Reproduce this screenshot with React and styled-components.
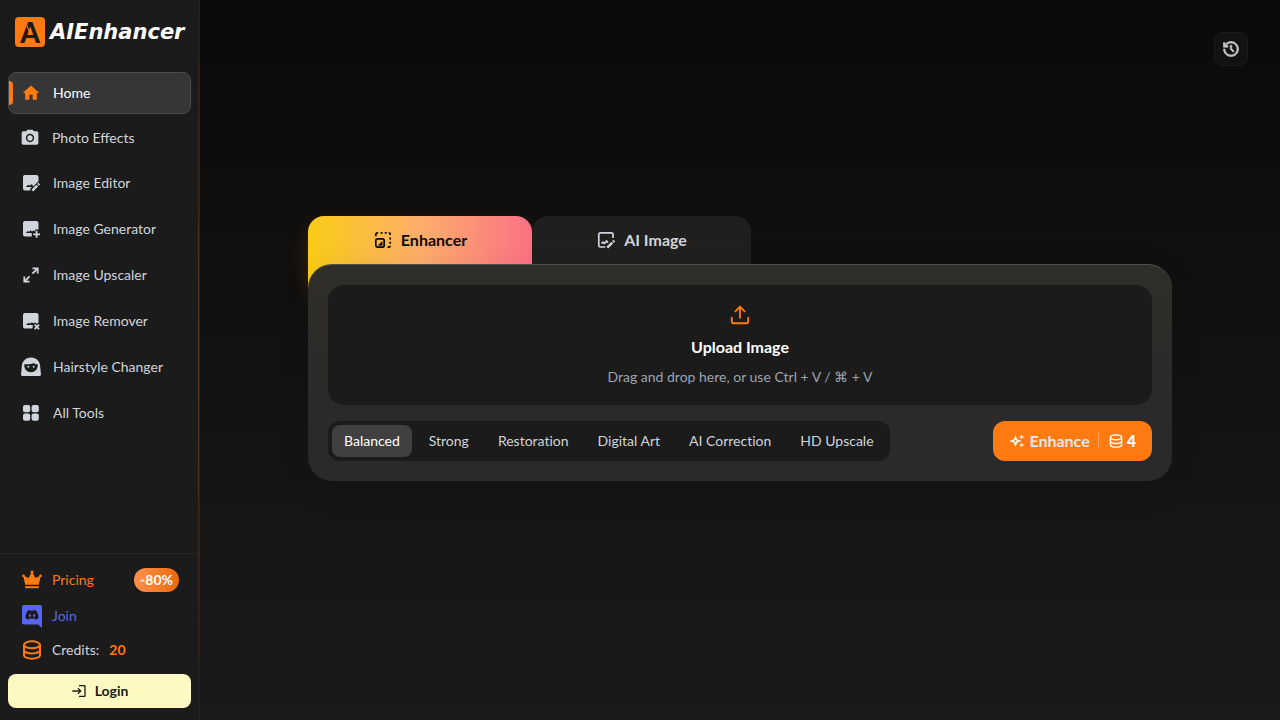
import React, { useState } from "react";
import styled, { createGlobalStyle, css } from "styled-components";
import { Upload } from "lucide-react";
import { FaDiscord } from "react-icons/fa";
import { MdHome, MdLogin, MdPhotoCamera } from "react-icons/md";
import { RiHistoryLine } from "react-icons/ri";

const GlobalStyle = createGlobalStyle`
  * {
    box-sizing: border-box;
  }

  body {
    margin: 0;
    background: #1a1a1a;
    color: #d1d5db;
    font-family: Lato, "Liberation Sans", sans-serif;
    font-size: 14px;
    line-height: 20px;
  }

  button {
    border: 0;
    margin: 0;
    font: inherit;
    color: inherit;
    cursor: pointer;
  }

  a {
    color: inherit;
    text-decoration: none;
  }

  svg {
    display: block;
    flex-shrink: 0;
  }
`;

const Page = styled.div`
  display: grid;
  grid-template-columns: 200px 1fr;
  min-height: 100vh;
`;

const Sidebar = styled.aside`
  position: relative;
  display: flex;
  flex-direction: column;
  background: #1b1b1b;
  border-right: 1px solid #232323;

  &::after {
    content: "";
    position: absolute;
    top: 0;
    right: 0;
    bottom: 0;
    width: 1px;
    background: linear-gradient(
      to bottom,
      transparent,
      rgba(255, 122, 17, 0.3) 50%,
      transparent
    );
  }
`;

const Brand = styled.a`
  display: flex;
  align-items: center;
  gap: 5px;
  height: 64px;
  padding-left: 15px;
  color: #fff;
`;

const BrandMark = styled.span`
  position: relative;
  display: flex;
  align-items: center;
  justify-content: center;
  width: 30px;
  height: 30px;
  border-radius: 4px;
  background: #ff7a11;
  color: #1b1b1b;
  font: 900 28px/28px Lato, sans-serif;

  &::after {
    content: "";
    position: absolute;
    top: 3px;
    left: 12px;
    width: 1px;
    height: 14px;
    background: #ff7a11;
    transform: rotate(-20deg);
  }
`;

const BrandName = styled.span`
  font: italic bold 21px/24px "DejaVu Sans", sans-serif;
`;

const Nav = styled.nav`
  display: flex;
  flex-direction: column;
  flex: 1;
  gap: 4px;
  padding: 8px;
`;

const NavItem = styled.a`
  position: relative;
  display: flex;
  align-items: center;
  gap: 12px;
  padding: 10px 12px;
  border: ${(props) => (props.$plain ? "0" : "1px solid transparent")};
  border-radius: 8px;

  ${(props) =>
    props.$active &&
    css`
      background: #363636;
      border-color: #4a4a4a;
      color: #fff;

      svg {
        color: #ff7a11;
      }

      &::before {
        content: "";
        position: absolute;
        left: 0;
        top: 8px;
        width: 4px;
        height: 24px;
        border-radius: 0 4px 4px 0;
        background: #ff7a11;
      }
    `}
`;

const SidebarFooter = styled.div`
  display: flex;
  flex-direction: column;
  padding: 8px 8px 12px;
  border-top: 1px solid #262626;
`;

const FooterRow = styled.a`
  display: flex;
  align-items: center;
  gap: 10px;
  height: ${(props) => (props.$tall ? "36px" : "32px")};
  padding: 0 12px 0 14px;
  color: ${(props) => props.$color || "#d1d5db"};
`;

const Discount = styled.span`
  margin-left: auto;
  padding: 2px 6px;
  border-radius: 12px;
  background: linear-gradient(to right, #ff914d, #ea6a0c);
  color: #fff;
  font-weight: bold;
`;

const FooterCoins = styled.span`
  color: #ff7a11;
`;

const Credits = styled.strong`
  color: #ff7a11;
`;

const LoginButton = styled.button`
  display: flex;
  align-items: center;
  justify-content: center;
  gap: 8px;
  height: 34px;
  margin-top: 8px;
  border-radius: 8px;
  background: #fef9c3;
  color: #1b1b1b;
  font-weight: bold;
`;

const Main = styled.main`
  display: flex;
  flex-direction: column;
  align-items: center;
  padding: 32px;
  background: linear-gradient(to bottom, #0a0a0a, #1a1a1a);
`;

const HistoryButton = styled.button`
  display: flex;
  align-items: center;
  justify-content: center;
  align-self: flex-end;
  width: 34px;
  height: 34px;
  padding: 0;
  border: 1px solid #1a1a1a;
  border-radius: 8px;
  background: #121212;
  color: #c4c4c4;

  svg {
    stroke: currentColor;
    stroke-width: 1;
  }
`;

const Workspace = styled.section`
  width: 100%;
  max-width: 864px;
  margin-top: 150px;
`;

const Tabs = styled.div`
  display: flex;
  height: 48px;
`;

const Tab = styled.button`
  display: flex;
  align-items: flex-start;
  justify-content: center;
  gap: 8px;
  width: ${(props) => (props.$active ? "224px" : "219px")};
  height: ${(props) => (props.$active ? "72px" : "48px")};
  padding: 12px 0;
  border-radius: 16px 16px 0 0;
  background: ${(props) =>
    props.$active
      ? "linear-gradient(to right, #facc15, #fdae6b 50%, #fb7185)"
      : "linear-gradient(to bottom, #1f1f1f, #21201e)"};
  box-shadow: ${(props) =>
    props.$active ? "0 8px 24px -4px rgba(255, 122, 17, 0.25)" : "none"};
  color: ${(props) => (props.$active ? "#0a0a0a" : "#d1d5db")};
  font-size: 16px;
  font-weight: bold;
  line-height: 24px;

  svg {
    margin-top: 2px;
  }
`;

const Panel = styled.div`
  position: relative;
  display: flex;
  flex-direction: column;
  gap: 16px;
  padding: 20px;
  border-top: 1px solid #53514d;
  border-radius: 24px;
  background: linear-gradient(to bottom, #302e29, #2a2a2a 70%);
  box-shadow: 0 8px 32px rgba(0, 0, 0, 0.1);
`;

const DropZone = styled.button`
  display: flex;
  flex-direction: column;
  align-items: center;
  gap: 8px;
  padding: 18px;
  border-radius: 16px;
  background: #1b1b1b;
  color: #9ca3af;

  svg {
    margin: 1px;
    color: #ff7a11;
  }
`;

const DropTitle = styled.strong`
  color: #fff;
  font-size: 16px;
  line-height: 24px;
`;

const Toolbar = styled.div`
  display: flex;
  align-items: center;
  justify-content: space-between;
`;

const Modes = styled.div`
  display: flex;
  gap: 5px;
  padding: 4px;
  border-radius: 12px;
  background: #1b1b1b;
`;

const Mode = styled.button`
  padding: 6px 12px;
  border-radius: 8px;
  background: ${(props) => (props.$active ? "#404040" : "transparent")};
  color: ${(props) => (props.$active ? "#fff" : "#d1d5db")};
  font-variant-ligatures: none;
`;

const EnhanceButton = styled.button`
  display: flex;
  align-items: center;
  gap: 4px;
  height: 40px;
  padding: 0 16px;
  border-radius: 12px;
  background: #ff7a11;
  color: #e5e7eb;
  font-size: 16px;
  font-weight: bold;
  line-height: 24px;

  svg,
  strong {
    color: #fff;
  }
`;

const Divider = styled.span`
  width: 1px;
  height: 16px;
  margin: 0 6px 0 4px;
  background: #ffa35c;
`;

const ImageEditIcon = () => (
  <svg width="20" height="20" viewBox="0 0 20 20" fill="currentColor">
    <path d="M4 2h11.5a2 2 0 0 1 2 2v4.2L12 13.8l-.5-2-1.3-.5-1.4 1.5-1.5-1L4.7 14h6.2L9.2 15.8V17.6H4a2 2 0 0 1-2-2V4a2 2 0 0 1 2-2z" />
    <path
      d="M11.3 17.7l5-5M17 11.900l1.300-1.300"
      stroke="currentColor"
      strokeWidth="2.5"
    />
  </svg>
);

const ImageAddIcon = () => (
  <svg width="20" height="20" viewBox="0 0 20 20" fill="currentColor">
    <path d="M4 2h11.5a2 2 0 0 1 2 2v6.4h-3.3v2.2l-1.7-1.2-1.6 1.2-1.3-1.4-1.4 1.5-1.3-.8L4.7 14h6.1v3.6H4a2 2 0 0 1-2-2V4a2 2 0 0 1 2-2z" />
    <path d="M14.7 11.8h1.8v2.6H19v1.8h-2.5v2.6h-1.8v-2.6h-2.6v-1.8h2.6z" />
  </svg>
);

const ImageRemoveIcon = () => (
  <svg width="20" height="20" viewBox="0 0 20 20" fill="currentColor">
    <path d="M4 2h11.5a2 2 0 0 1 2 2v7.8l-1.7.9-1.8-1.2-1.8.7-1.6-1-1.2 1.6-1.6-1.1L4.7 14h6.6l.8 1.6-1.2 2H4a2 2 0 0 1-2-2V4a2 2 0 0 1 2-2z" />
    <path
      d="M13.6 13.6l4.5 4.5M18.1 13.6l-4.5 4.5"
      stroke="currentColor"
      strokeWidth="1.8"
    />
  </svg>
);

const UpscaleIcon = () => (
  <svg
    width="20"
    height="20"
    viewBox="0 0 20 20"
    fill="none"
    stroke="currentColor"
    strokeWidth="1.8"
  >
    <path d="M11.5 3.3h5.2v5.2M16.7 3.3l-5.3 5.3M3.3 11.5v5.2h5.2M3.3 16.7l5.3-5.3" />
  </svg>
);

const HairIcon = () => (
  <svg width="20" height="20" viewBox="0 0 20 20" fill="currentColor">
    <path
      fillRule="evenodd"
      d="M10 .5c5.4 0 9.2 4 9.2 9.2l.8 7.8a1.4 1.4 0 0 1-1.4 1.5H1.4A1.4 1.4 0 0 1 0 17.5L.8 9.7C.8 4.5 4.6.5 10 .5zM3.3 7.2c-.4 4.9 2.5 8.1 6.7 8.1s7.1-3.2 6.7-8.1c-2 .3-3-.3-3.7-1.2-2.2 1.3-6 1.6-9.7 1.2z"
    />
    <circle cx="7.3" cy="9.7" r="1" />
    <circle cx="12.7" cy="9.7" r="1" />
  </svg>
);

const GridIcon = () => (
  <svg width="20" height="20" viewBox="0 0 20 20" fill="currentColor">
    <rect x="2" y="2" width="7.2" height="7.2" rx="2" />
    <rect x="10.6" y="2" width="7.2" height="7.2" rx="2" />
    <rect x="2" y="10.6" width="7.2" height="7.2" rx="2" />
    <rect x="10.6" y="10.6" width="7.2" height="7.2" rx="2" />
  </svg>
);

const CrownIcon = () => (
  <svg width="20" height="20" viewBox="0 0 20 20" fill="currentColor">
    <path d="M3.2 14.8L1.2 5.5 6.5 8 10 1.8 13.500 8l5.300-2.500-2 9.300z" />
    <circle cx="10" cy="2" r="1.5" />
    <circle cx="1.4" cy="5.8" r="1.4" />
    <circle cx="18.6" cy="5.8" r="1.4" />
    <rect x="3" y="16.3" width="14" height="2" rx=".6" />
  </svg>
);

const DiscordIcon = () => (
  <svg width="20" height="24" viewBox="0 0 20 24">
    <path
      d="M2 1h16a2 2 0 0 1 2 2v21l-4-3.5H2a2 2 0 0 1-2-2V3a2 2 0 0 1 2-2z"
      fill="#5865f2"
    />
    <FaDiscord x="3" y="4" width="14" height="14" color="#1b1b1b" />
  </svg>
);

const CoinsIcon = ({ size }) => (
  <svg
    width={size}
    height={size}
    viewBox="0 0 20 20"
    fill="none"
    stroke="currentColor"
    strokeWidth="2"
  >
    <ellipse cx="10" cy="4.8" rx="8" ry="3.5" />
    <path d="M2 4.8v10.4c0 1.9 3.6 3.5 8 3.5s8-1.6 8-3.5V4.8M2 10c0 1.9 3.6 3.5 8 3.5s8-1.6 8-3.5" />
  </svg>
);

const SelectLargeIcon = () => (
  <svg
    width="20"
    height="20"
    viewBox="0 0 20 20"
    fill="none"
    stroke="currentColor"
    strokeWidth="1.7"
  >
    <path d="M2.8 6.3V4.5c0-.9.7-1.7 1.7-1.7h.6M7.6 2.8h1.900M11.8 2.8h1.900M15.7 2.8c.9 0 1.500.7 1.500 1.600v.6M17.2 7.500v2M17.2 11.700v2M17.2 15.700c0 .8-.7 1.500-1.500 1.500h-1.200" />
    <rect x="2.8" y="8.8" width="8.4" height="8.4" rx="2" />
    <path d="M5.5 15.2h3.6v-3.4z" fill="currentColor" strokeWidth=".8" />
  </svg>
);

const ImageEditLineIcon = () => (
  <svg
    width="20"
    height="20"
    viewBox="0 0 20 20"
    fill="none"
    stroke="currentColor"
    strokeWidth="1.7"
  >
    <path d="M17 8V4.300c0-.8-.6-1.500-1.500-1.500H4.300c-.8 0-1.500.7-1.500 1.500v11.200c0 .9.700 1.500 1.500 1.500h5M5.500 13.500L7 12.200l1.600 1.100 2-2.300 1.300 1.600" />
    <path d="M11.3 17.7l5-5M17 12l1.3-1.3" strokeWidth="2.5" />
  </svg>
);

const SparkleIcon = () => (
  <svg width="16" height="16" viewBox="0 0 16 16" fill="currentColor">
    <path
      d="M6.5 4l1.1 2.9 3 1.1-3 1.1-1.1 2.9-1.1-2.9-3-1.1 3-1.1z"
      fill="none"
      stroke="currentColor"
      strokeWidth="1.5"
    />
    <path
      d="M12.6 2l.6 1.4 1.4.6-1.4.6-.6 1.4-.6-1.4-1.4-.6 1.4-.6zM12.6 10l.6 1.4 1.4.6-1.4.6-.6 1.4-.6-1.4-1.4-.6 1.4-.6z"
      stroke="currentColor"
      strokeWidth=".5"
    />
  </svg>
);

const links = [
  { label: "Home", icon: <MdHome size={20} />, active: true },
  { label: "Photo Effects", icon: <MdPhotoCamera size={20} />, plain: true },
  { label: "Image Editor", icon: <ImageEditIcon /> },
  { label: "Image Generator", icon: <ImageAddIcon /> },
  { label: "Image Upscaler", icon: <UpscaleIcon /> },
  { label: "Image Remover", icon: <ImageRemoveIcon /> },
  { label: "Hairstyle Changer", icon: <HairIcon /> },
  { label: "All Tools", icon: <GridIcon /> },
];

const modes = [
  "Balanced",
  "Strong",
  "Restoration",
  "Digital Art",
  "AI Correction",
  "HD Upscale",
];

const App = () => {
  const [mode, setMode] = useState("Balanced");
  const [tab, setTab] = useState("enhancer");

  return (
    <>
      <GlobalStyle />
      <Page>
        <Sidebar>
          <Brand href="#">
            <BrandMark>A</BrandMark>
            <BrandName>AIEnhancer</BrandName>
          </Brand>
          <Nav>
            {links.map(({ label, icon, active, plain }) => (
              <NavItem key={label} href="#" $active={active} $plain={plain}>
                {icon}
                {label}
              </NavItem>
            ))}
          </Nav>
          <SidebarFooter>
            <FooterRow href="#" $tall $color="#ff7a11">
              <CrownIcon />
              Pricing
              <Discount>-80%</Discount>
            </FooterRow>
            <FooterRow href="#" $tall $color="#5865f2">
              <DiscordIcon />
              Join
            </FooterRow>
            <FooterRow href="#">
              <FooterCoins>
                <CoinsIcon size={20} />
              </FooterCoins>
              Credits: <Credits>20</Credits>
            </FooterRow>
            <LoginButton>
              <MdLogin size={16} />
              Login
            </LoginButton>
          </SidebarFooter>
        </Sidebar>
        <Main>
          <HistoryButton aria-label="History">
            <RiHistoryLine size={18} />
          </HistoryButton>
          <Workspace>
            <Tabs>
              <Tab
                $active={tab === "enhancer"}
                onClick={() => setTab("enhancer")}
              >
                <SelectLargeIcon />
                Enhancer
              </Tab>
              <Tab $active={tab === "image"} onClick={() => setTab("image")}>
                <ImageEditLineIcon />
                AI Image
              </Tab>
            </Tabs>
            <Panel>
              <DropZone>
                <Upload size={22} />
                <DropTitle>Upload Image</DropTitle>
                <span>Drag and drop here, or use Ctrl + V / ⌘ + V</span>
              </DropZone>
              <Toolbar>
                <Modes>
                  {modes.map((name) => (
                    <Mode
                      key={name}
                      $active={mode === name}
                      onClick={() => setMode(name)}
                    >
                      {name}
                    </Mode>
                  ))}
                </Modes>
                <EnhanceButton>
                  <SparkleIcon />
                  Enhance
                  <Divider />
                  <CoinsIcon size={14} />
                  <strong>4</strong>
                </EnhanceButton>
              </Toolbar>
            </Panel>
          </Workspace>
        </Main>
      </Page>
    </>
  );
};

export default App;
